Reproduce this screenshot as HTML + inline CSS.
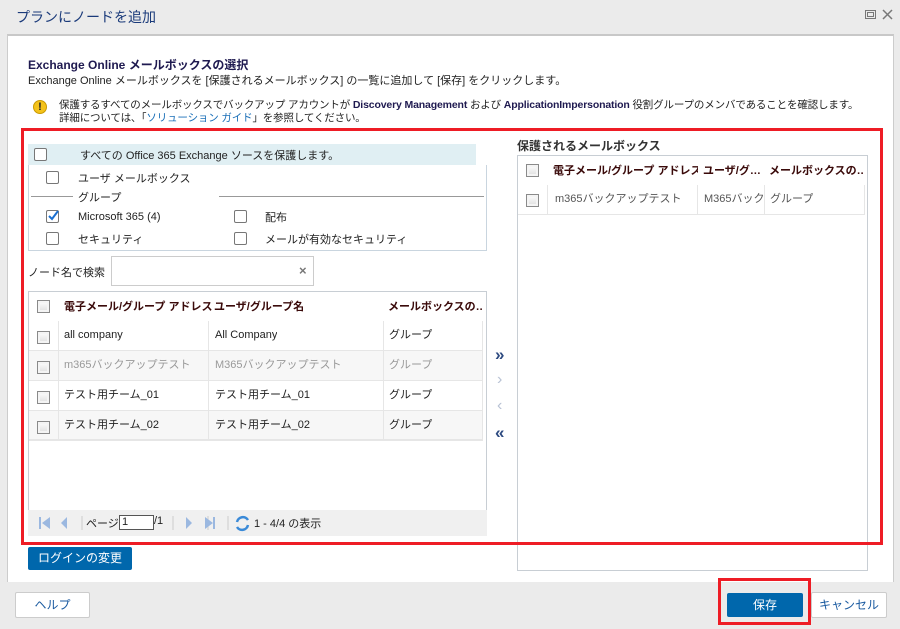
<!DOCTYPE html>
<html><head><meta charset="utf-8"><style>
*{box-sizing:border-box;margin:0;padding:0}
body{width:900px;height:629px;background:#ebebeb;font-family:"Liberation Sans","Noto Sans CJK JP",sans-serif;font-size:12px;color:#222;position:relative;overflow:hidden}
.a{position:absolute}
.cb{position:absolute;width:13px;height:13px;border:1px solid #777;border-radius:2px;background:#fff}
.gcb{position:absolute;width:13px;height:13px;border:1px solid #8a8a8a;background:linear-gradient(#fff,#ddd);box-shadow:inset 0 0 0 2px #f4f4f4}
.hd{font-weight:bold;color:#3a0a0a;font-size:10px}
.cell{position:absolute;white-space:nowrap;overflow:hidden;font-size:11px;line-height:16px;height:16px}
.btn{position:absolute;border-radius:2px;text-align:center;font-size:12px}
</style></head><body>
<div class="a" style="left:16px;top:7px;font-size:14px;color:#1a3a7a">プランにノードを追加</div>
<svg class="a" style="left:864px;top:8px" width="36" height="14"><rect x="1.5" y="2.5" width="10" height="8" fill="none" stroke="#777"/><rect x="3.5" y="4.5" width="6" height="4" fill="none" stroke="#777"/><path d="M19 2l9 9M28 2l-9 9" stroke="#777" stroke-width="1.5"/></svg>
<div class="a" style="left:7px;top:34px;width:887px;background:#fff;border-top:2px solid #c8c8c8;border-left:1px solid #ccc;border-right:1px solid #ccc;height:548px"></div>
<div class="a" style="left:28px;top:56px;font-weight:bold;color:#1f1a50;font-size:12px">Exchange Online メールボックスの選択</div>
<div class="a" style="left:28px;top:72px;font-size:11px;white-space:nowrap">Exchange Online メールボックスを [保護されるメールボックス] の一覧に追加して [保存] をクリックします。</div>
<div class="a" style="left:33px;top:100px;width:14px;height:14px;border-radius:50%;background:#f4c21a;border:1px solid #c99a00;text-align:center;font-weight:bold;font-size:11px;line-height:12px">!</div>
<div class="a" style="left:59px;top:99px;font-size:10.5px;line-height:13px;white-space:nowrap;letter-spacing:-0.15px">保護するすべてのメールボックスでバックアップ アカウントが <b style="color:#1f1a50">Discovery Management</b> および <b style="color:#1f1a50">ApplicationImpersonation</b> 役割グループのメンバであることを確認します。<br>詳細については、「<span style="color:#1a6fb8">ソリューション ガイド</span>」を参照してください。</div>

<div class="a" style="left:28px;top:144px;width:448px;height:21px;background:#e0eff3"></div>
<div class="cb" style="left:34px;top:148px"></div>
<div class="a" style="left:80px;top:147px;font-size:11px">すべての Office 365 Exchange ソースを保護します。</div>
<div class="a" style="left:28px;top:165px;width:459px;height:86px;border:1px solid #c9d5df;border-top:none"></div>
<div class="cb" style="left:46px;top:171px"></div>
<div class="a" style="left:78px;top:170px;font-size:11px">ユーザ メールボックス</div>
<div class="a" style="left:31px;top:196px;width:42px;border-top:1px solid #999"></div>
<div class="a" style="left:78px;top:189px;font-size:11px">グループ</div>
<div class="a" style="left:219px;top:196px;width:265px;border-top:1px solid #999"></div>
<div class="cb" style="left:46px;top:210px"></div>
<svg class="a" style="left:46px;top:208px" width="14" height="14"><path d="M3 8l3 3 6-8" stroke="#1a6fd0" stroke-width="2" fill="none"/></svg>
<div class="a" style="left:78px;top:210px;font-size:11px;line-height:14px">Microsoft 365 (4)</div>
<div class="cb" style="left:234px;top:210px"></div>
<div class="a" style="left:265px;top:209px;font-size:11px">配布</div>
<div class="cb" style="left:46px;top:232px"></div>
<div class="a" style="left:78px;top:231px;font-size:11px">セキュリティ</div>
<div class="cb" style="left:234px;top:232px"></div>
<div class="a" style="left:265px;top:231px;font-size:11px">メールが有効なセキュリティ</div>

<div class="a" style="left:28px;top:264px;font-size:11px">ノード名で検索</div>
<div class="a" style="left:111px;top:256px;width:203px;height:30px;border:1px solid #ccc;background:#fff"></div>
<div class="a" style="left:299px;top:263px;color:#777;font-weight:bold;font-size:13px">×</div>

<div class="a" style="left:28px;top:291px;width:459px;height:220px;border:1px solid #c8ced4;background:#fff"></div>
<div class="gcb" style="left:37px;top:300px"></div>
<div class="cell hd" style="left:64px;top:299px">電子メール/グループ アドレス</div>
<div class="cell hd" style="left:214px;top:299px">ユーザ/グループ名</div>
<div class="cell hd" style="left:388px;top:299px;width:94px">メールボックスの…</div>
<div class="a" style="left:29px;top:321px;width:454px;height:120px">
 <div class="a" style="left:0;top:0;width:454px;height:30px;background:#fff;border-bottom:1px solid #e6e6e6"></div>
 <div class="a" style="left:0;top:30px;width:454px;height:30px;background:#f7f7f7;border-bottom:1px solid #e6e6e6"></div>
 <div class="a" style="left:0;top:60px;width:454px;height:30px;background:#fff;border-bottom:1px solid #e6e6e6"></div>
 <div class="a" style="left:0;top:90px;width:454px;height:30px;background:#f7f7f7;border-bottom:2px solid #e6e6e6"></div>
 <div class="a" style="left:29px;top:0;height:120px;border-left:1px solid #e6e6e6"></div>
 <div class="a" style="left:179px;top:0;height:120px;border-left:1px solid #e6e6e6"></div>
 <div class="a" style="left:354px;top:0;height:120px;border-left:1px solid #e6e6e6"></div>
 <div class="a" style="left:453px;top:0;height:120px;border-left:1px solid #e6e6e6"></div>
</div>
<div class="gcb" style="left:37px;top:331px"></div><div class="gcb" style="left:37px;top:361px"></div><div class="gcb" style="left:37px;top:391px"></div><div class="gcb" style="left:37px;top:421px"></div>
<div class="cell" style="left:64px;top:327px">all company</div><div class="cell" style="left:215px;top:327px">All Company</div><div class="cell" style="left:389px;top:327px">グループ</div>
<div class="cell" style="left:64px;top:357px;color:#999">m365バックアップテスト</div><div class="cell" style="left:215px;top:357px;color:#999">M365バックアップテスト</div><div class="cell" style="left:389px;top:357px;color:#999">グループ</div>
<div class="cell" style="left:64px;top:387px">テスト用チーム_01</div><div class="cell" style="left:215px;top:387px">テスト用チーム_01</div><div class="cell" style="left:389px;top:387px">グループ</div>
<div class="cell" style="left:64px;top:417px">テスト用チーム_02</div><div class="cell" style="left:215px;top:417px">テスト用チーム_02</div><div class="cell" style="left:389px;top:417px">グループ</div>
<div class="a" style="left:28px;top:510px;width:459px;height:26px;background:#f0f0f0"></div>
<svg class="a" style="left:36px;top:514px" width="300" height="18"><path d="M4 3v12" stroke="#9bb8e0" stroke-width="2"/><path d="M14 3l-8 6 8 6z" fill="#9bb8e0"/><path d="M31 3l-6 6 6 6z" fill="#9bb8e0"/><path d="M46 2v14M102 2v14M137 2v14M172 2v14M192 2v14" stroke="#ccc"/><path d="M150 3l6 6-6 6z" fill="#9bb8e0"/><path d="M169 3l8 6-8 6z" fill="#9bb8e0"/><path d="M178 3v12" stroke="#9bb8e0" stroke-width="2"/><path d="M201 8a6 6 0 0 1 11-2M212 11a6 6 0 0 1-11 2" stroke="#3a8ad8" stroke-width="2.5" fill="none"/></svg>
<div class="a" style="left:119px;top:515px;width:35px;height:15px;border:1px solid #555;background:#fff;font-size:11px;padding-left:2px;line-height:13px">1</div>
<div class="a" style="left:86px;top:515px;font-size:11px">ページ</div>
<div class="a" style="left:154px;top:515px;font-size:11px">/1</div>
<div class="a" style="left:254px;top:515px;font-size:11px">1 - 4/4 の表示</div>

<div class="a" style="left:495px;top:345px;font-size:17px;font-weight:bold;color:#2d4a80">»</div>
<div class="a" style="left:497px;top:371px;font-size:16px;color:#b8c2d4">›</div>
<div class="a" style="left:497px;top:397px;font-size:16px;color:#b8c2d4">‹</div>
<div class="a" style="left:495px;top:423px;font-size:17px;font-weight:bold;color:#2d4a80">«</div>

<div class="a" style="left:517px;top:137px;font-weight:bold;color:#333;font-size:12px">保護されるメールボックス</div>
<div class="a" style="left:517px;top:155px;width:351px;height:416px;border:1px solid #c8ced4;background:#fff"></div>
<div class="gcb" style="left:526px;top:164px"></div>
<div class="cell hd" style="left:553px;top:163px;width:145px">電子メール/グループ アドレス</div>
<div class="cell hd" style="left:703px;top:163px;width:60px">ユーザ/グ…</div>
<div class="cell hd" style="left:769px;top:163px;width:94px">メールボックスの…</div>
<div class="a" style="left:518px;top:185px;width:347px;height:30px;border-bottom:1px solid #e6e6e6"></div>
<div class="a" style="left:547px;top:185px;height:30px;border-left:1px solid #e6e6e6"></div>
<div class="a" style="left:697px;top:185px;height:30px;border-left:1px solid #e6e6e6"></div>
<div class="a" style="left:764px;top:185px;height:30px;border-left:1px solid #e6e6e6"></div>
<div class="a" style="left:864px;top:185px;height:30px;border-left:1px solid #e6e6e6"></div>
<div class="gcb" style="left:526px;top:194px"></div>
<div class="cell" style="left:555px;top:191px;color:#555">m365バックアップテスト</div>
<div class="cell" style="left:704px;top:191px;width:60px;color:#555">M365バックアップ</div>
<div class="cell" style="left:770px;top:191px;color:#555">グループ</div>

<div class="a" style="left:21px;top:128px;width:862px;height:417px;border:3px solid #ee1c25"></div>

<div class="btn" style="left:28px;top:547px;width:104px;height:23px;background:#0067ac;color:#fff;line-height:23px">ログインの変更</div>

<div class="btn" style="left:15px;top:592px;width:75px;height:26px;background:#fff;border:1px solid #ccc;color:#1a5aa0;line-height:24px">ヘルプ</div>
<div class="btn" style="left:727px;top:593px;width:76px;height:24px;background:#0067ac;color:#fff;line-height:24px">保存</div>
<div class="btn" style="left:811px;top:592px;width:76px;height:26px;background:#fff;border:1px solid #ccc;color:#1a5aa0;line-height:24px">キャンセル</div>
<div class="a" style="left:718px;top:578px;width:93px;height:47px;border:3px solid #ee1c25"></div>
</body></html>
